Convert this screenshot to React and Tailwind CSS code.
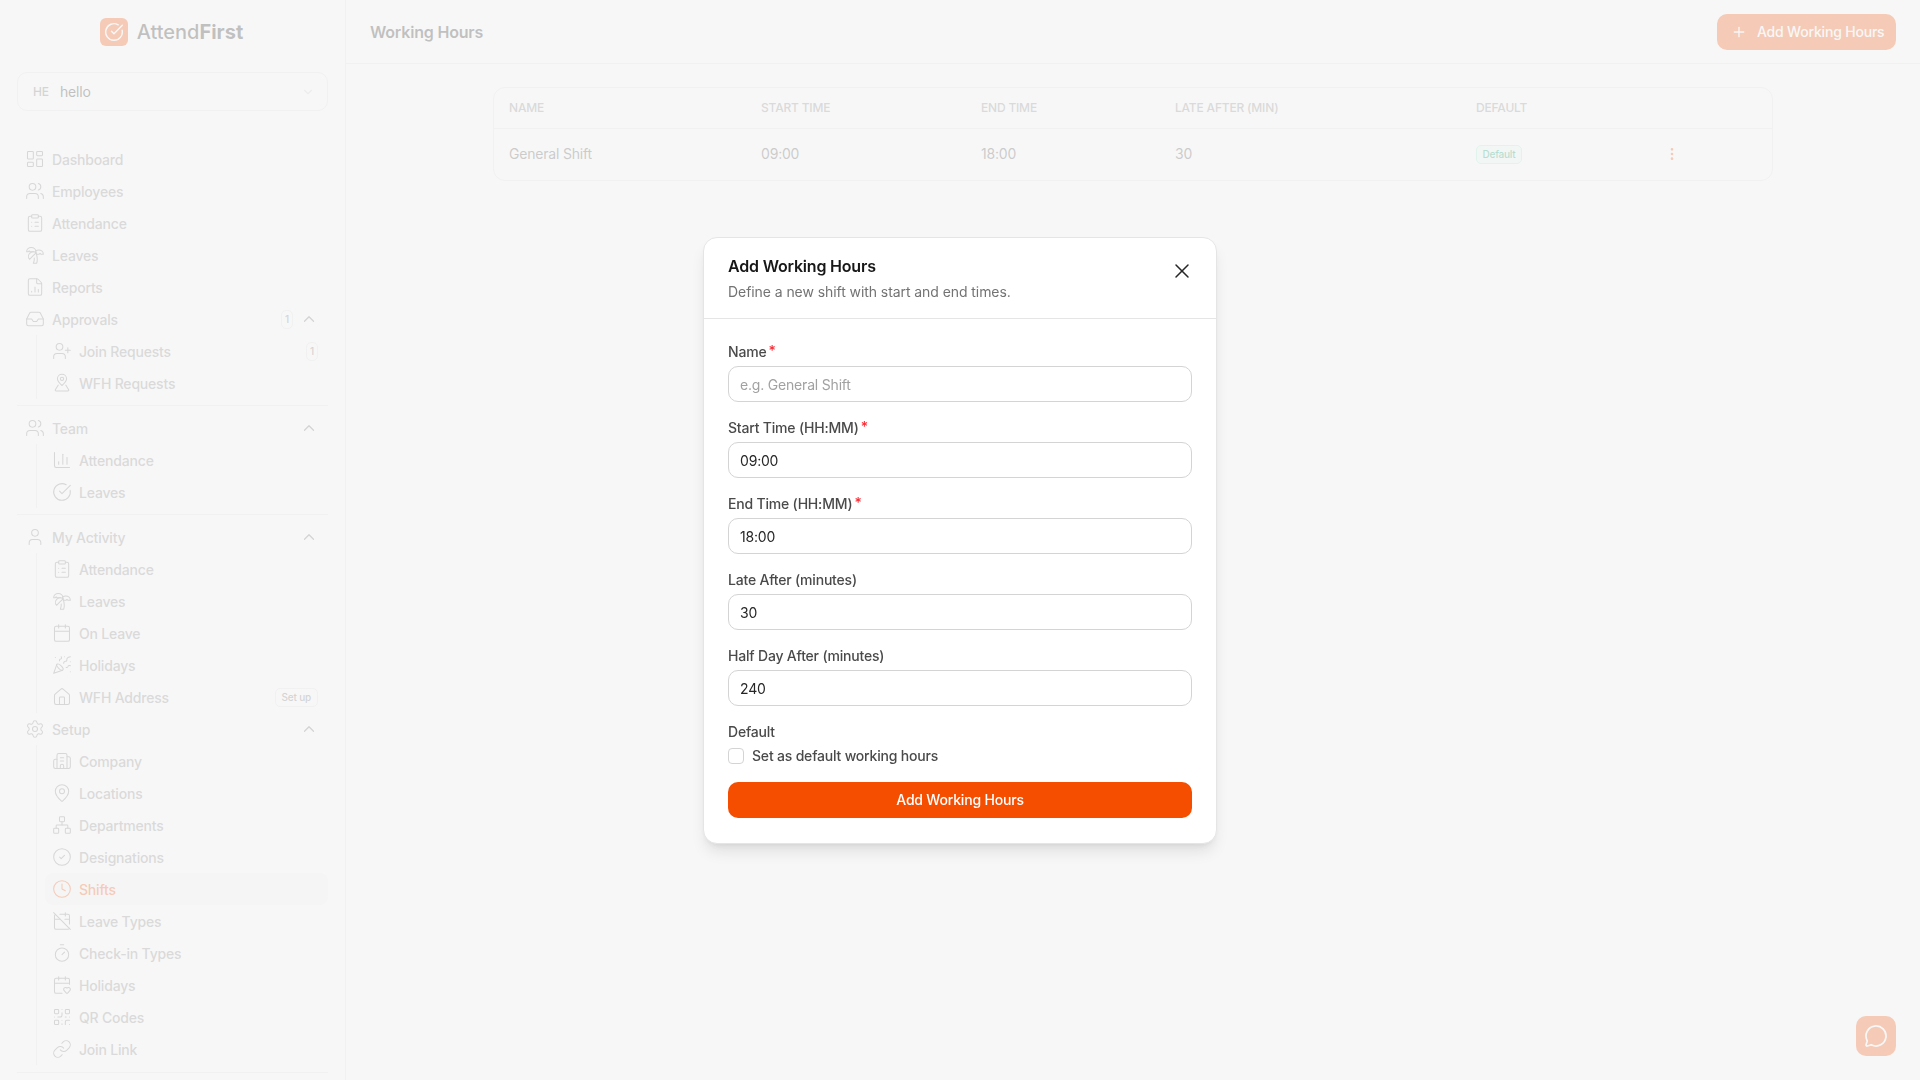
import React from 'react';
import {
  LayoutDashboard, Users, ClipboardList, TreePalm, FileChartColumn, Inbox, UserPlus, MapPin,
  ChevronUp, ChevronDown, ChartColumn, CircleCheckBig, User, Calendar, PartyPopper, House, Settings,
  Building2, Network, CircleCheck, Clock, CalendarOff, Timer, CalendarHeart, QrCode, Link, Plus,
  EllipsisVertical, MessageCircle, X,
} from 'lucide-react';

const FONT = 'font-[Inter,"Noto_Sans",sans-serif]';

const UserPin = ({ size = 20, strokeWidth = 1.25, className }) => (
  <svg width={size} height={size} className={className} viewBox="0 0 24 24" fill="none" stroke="currentColor" strokeWidth={strokeWidth} strokeLinecap="round" strokeLinejoin="round">
    <path d="M12 15c-3-2.600-5.500-5-5.500-8a5.500 5.500 0 0 1 11 0c0 3-2.500 5.400-5.500 8z" />
    <circle cx="12" cy="7" r="2" />
    <path d="M7.500 14.500 4 20a1 1 0 0 0 .9 1.500h14.200A1 1 0 0 0 20 20l-3.500-5.500" />
  </svg>
);

const Pill = ({ children }) => (
  <span className={`ml-auto flex h-[19px] items-center justify-center rounded-[5px] border border-neutral-200 bg-white text-[10px] text-neutral-500 ${children.length > 1 ? 'px-[6px]' : 'px-[3px]'}`}>
    {children}
  </span>
);

const Row = ({ icon: Icon, label, badge, chevron, active, sub }) => (
  <div className={`flex h-8 items-center gap-2 rounded-lg pr-[10px] text-[14px] font-medium ${sub ? 'pl-2' : 'pl-[9px]'} ${active ? 'bg-neutral-100 text-[#f54e00]' : 'text-[#8a8a8a]'}`}>
    <span className={`flex w-[18px] shrink-0 justify-center ${active ? 'text-[#f54e00]' : 'text-[#808080]'}`}>
      <Icon size={20} strokeWidth={1.25} className="-mx-[1px] shrink-0" />
    </span>
    <span>{label}</span>
    {badge && <Pill>{badge}</Pill>}
    {chevron && (
      <ChevronUp size={18} strokeWidth={1.75} className={`text-neutral-500 ${badge ? '-ml-[1px]' : 'ml-auto'}`} />
    )}
  </div>
);

const Group = ({ icon, label, badge, items }) => (
  <div>
    <Row icon={icon} label={label} badge={badge} chevron />
    <div className="ml-[19px] border-l border-neutral-200 pl-2">
      {items.map((it) => (
        <Row key={it.label} sub {...it} />
      ))}
    </div>
  </div>
);

const Sidebar = () => (
  <aside className="flex h-screen w-[346px] shrink-0 flex-col overflow-hidden border-r border-neutral-200 bg-white">
    <div className="flex h-16 shrink-0 items-center justify-center gap-[9px] pr-[2px]">
      <div className="flex h-7 w-7 items-center justify-center rounded-md bg-[#f54e00] text-white">
        <CircleCheckBig size={20} strokeWidth={1.75} />
      </div>
      <span className="text-[20px] font-medium tracking-normal text-neutral-800">
        Attend<span className="font-bold">First</span>
      </span>
    </div>
    <div className="mx-[17px] mt-[8px] flex h-[39px] shrink-0 items-center rounded-[10px] border border-neutral-200 pl-[15px] pr-3">
      <span className="w-[27px] text-xs font-medium text-neutral-500">HE</span>
      <span className="text-sm font-normal text-neutral-800">hello</span>
      <ChevronDown size={14} className="ml-auto text-neutral-300" />
    </div>
    <nav className="mx-[17px] mt-8 flex flex-col">
      <Row icon={LayoutDashboard} label="Dashboard" />
      <Row icon={Users} label="Employees" />
      <Row icon={ClipboardList} label="Attendance" />
      <Row icon={TreePalm} label="Leaves" />
      <Row icon={FileChartColumn} label="Reports" />
      <Group
        icon={Inbox}
        label="Approvals"
        badge="1"
        items={[
          { icon: UserPlus, label: 'Join Requests', badge: '1' },
          { icon: UserPin, label: 'WFH Requests' },
        ]}
      />
      <div className="my-[6px] border-t border-neutral-200" />
      <Group
        icon={Users}
        label="Team"
        items={[
          { icon: ChartColumn, label: 'Attendance' },
          { icon: CircleCheckBig, label: 'Leaves' },
        ]}
      />
      <div className="my-[6px] border-t border-neutral-200" />
      <Group
        icon={User}
        label="My Activity"
        items={[
          { icon: ClipboardList, label: 'Attendance' },
          { icon: TreePalm, label: 'Leaves' },
          { icon: Calendar, label: 'On Leave' },
          { icon: PartyPopper, label: 'Holidays' },
          { icon: House, label: 'WFH Address', badge: 'Set up' },
        ]}
      />
      <Group
        icon={Settings}
        label="Setup"
        items={[
          { icon: Building2, label: 'Company' },
          { icon: MapPin, label: 'Locations' },
          { icon: Network, label: 'Departments' },
          { icon: CircleCheck, label: 'Designations' },
          { icon: Clock, label: 'Shifts', active: true },
          { icon: CalendarOff, label: 'Leave Types' },
          { icon: Timer, label: 'Check-in Types' },
          { icon: CalendarHeart, label: 'Holidays' },
          { icon: QrCode, label: 'QR Codes' },
          { icon: Link, label: 'Join Link' },
        ]}
      />
      <div className="my-[7px] border-t border-neutral-200" />
    </nav>
  </aside>
);

const ShiftsTable = () => (
  <div className="mx-auto mt-[23px] w-[1280px] overflow-hidden rounded-xl border border-neutral-200 bg-white">
    <table className="w-full table-fixed text-left">
      <thead>
        <tr className="h-[40px] border-b border-neutral-200 text-xs font-medium uppercase text-[#8a8a8a]">
          <th className="w-[252px] pl-[15px] font-medium">Name</th>
          <th className="w-[220px] pl-[15px] font-medium">Start Time</th>
          <th className="w-[194px] pl-[15px] font-medium">End Time</th>
          <th className="w-[301px] pl-[15px] font-medium">Late After (min)</th>
          <th className="w-[178px] pl-[15px] font-medium">Default</th>
          <th />
        </tr>
      </thead>
      <tbody>
        <tr className="h-[52px] text-sm text-neutral-600">
          <td className="pl-[15px]">General Shift</td>
          <td className="pl-[15px]">09:00</td>
          <td className="pl-[15px]">18:00</td>
          <td className="pl-[15px]">30</td>
          <td className="pl-[15px]">
            <span className="flex h-[19px] w-[46px] items-center justify-center rounded-[5px] border border-emerald-200 bg-emerald-50 text-[10px] font-medium text-emerald-600">
              Default
            </span>
          </td>
          <td className="pl-[25px]">
            <EllipsisVertical size={16} className="text-[#f54e00]" />
          </td>
        </tr>
      </tbody>
    </table>
  </div>
);

const Field = ({ label, required, value, placeholder }) => (
  <div>
    <label className="flex h-5 items-center text-sm font-medium text-[#4a4a4a]">
      {label}
      {required && <span className="ml-[2px] -translate-y-[1px] text-red-500">*</span>}
    </label>
    <input
      readOnly
      value={value || ''}
      placeholder={placeholder}
      className="mt-1 block h-9 w-full rounded-[10px] border border-neutral-300 bg-white px-[11px] text-sm text-neutral-800 outline-none placeholder:text-neutral-400"
    />
  </div>
);

const AddShiftModal = () => (
  <div className="fixed inset-0 flex items-center justify-center bg-[#f4f4f4]/75 backdrop-blur-[0.5px]">
    <div className="w-[514px] rounded-[14px] border border-neutral-200 bg-white shadow-lg">
      <div className="relative border-b border-neutral-200 px-6 py-4">
        <h2 className="text-base font-semibold text-neutral-900">Add Working Hours</h2>
        <p className="mt-1 text-sm tracking-[-0.005em] text-neutral-500">Define a new shift with start and end times.</p>
        <button className="absolute right-[22px] top-[21px] text-neutral-800">
          <X size={24} strokeWidth={1.5} />
        </button>
      </div>
      <div className="flex flex-col gap-4 px-6 pb-[24.5px] pt-[23.5px]">
        <Field label="Name" required placeholder="e.g. General Shift" />
        <Field label="Start Time (HH:MM)" required value="09:00" />
        <Field label="End Time (HH:MM)" required value="18:00" />
        <Field label="Late After (minutes)" value="30" />
        <Field label="Half Day After (minutes)" value="240" />
        <div>
          <div className="flex h-5 items-center text-sm font-medium text-[#4a4a4a]">Default</div>
          <label className="mt-1 flex h-5 items-center gap-2 text-sm font-medium text-[#4a4a4a]">
            <span className="h-4 w-4 rounded-[4px] border border-neutral-300 bg-white" />
            Set as default working hours
          </label>
        </div>
        <button className="h-9 w-full rounded-[10px] bg-[#f54e00] text-sm font-medium text-white">
          Add Working Hours
        </button>
      </div>
    </div>
  </div>
);

export default function App() {
  return (
    <div className={`flex h-screen overflow-hidden bg-white tracking-[-0.012em] ${FONT}`}>
      <Sidebar />
      <main className="flex min-w-0 flex-1 flex-col">
        <header className="flex h-16 shrink-0 items-center justify-between border-b border-neutral-200 pl-6 pr-6">
          <h1 className="text-base font-semibold text-neutral-800">Working Hours</h1>
          <button className="flex h-9 w-[179px] items-center gap-[10px] rounded-[10px] bg-[#f54e00] pl-[14px] text-sm font-medium text-white">
            <Plus size={16} />
            Add Working Hours
          </button>
        </header>
        <ShiftsTable />
      </main>
      <button className="fixed bottom-6 right-6 flex h-10 w-10 items-center justify-center rounded-[10px] bg-[#f54e00] text-white">
        <MessageCircle size={24} strokeWidth={1.75} />
      </button>
      <AddShiftModal />
    </div>
  );
}
